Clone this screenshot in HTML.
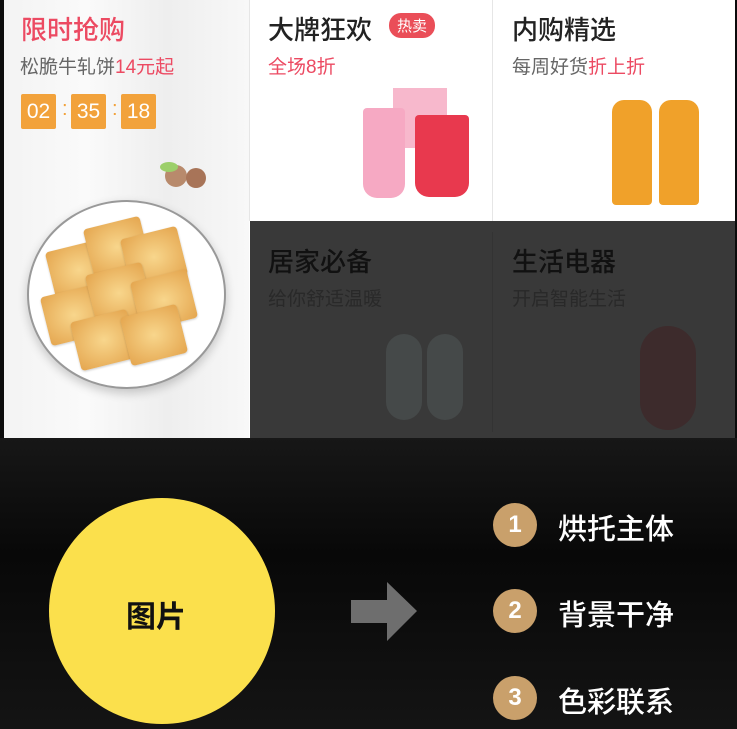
<!DOCTYPE html><html><head><meta charset="utf-8"><style>
body{margin:0;width:737px;height:729px;overflow:hidden;background:#0b0b0b;font-family:"Liberation Sans","Noto Sans CJK SC",sans-serif;position:relative}
.a{position:absolute}
.t{font-size:26px;color:#222;white-space:nowrap;font-weight:500}
.s{font-size:19px;color:#666;white-space:nowrap}
.r{color:#ec4a62}
.box{background:#f2a23b;color:#fff;font-size:21px;width:35px;height:35px;line-height:35px;text-align:center;border-radius:2px}
.num{width:44px;height:44px;border-radius:50%;background:#c9a06b;color:#fff;font-size:24px;font-weight:bold;text-align:center;line-height:44px}
.lb{color:#fff;font-size:29px;white-space:nowrap;font-weight:500}
.ck{position:absolute;width:58px;height:50px;background:radial-gradient(#f8d68c,#e4a54e);border-radius:4px;transform:rotate(-14deg);box-shadow:0 1px 2px rgba(0,0,0,.2)}
</style></head><body>
<div class="a" style="left:0;top:438px;width:737px;height:291px;background:linear-gradient(#171717,#080808 40%,#141414)"></div>
<div class="a" style="left:4px;top:0;width:731px;height:438px;background:#fff"></div>
<div class="a" style="left:4px;top:0;width:245px;height:438px;background:linear-gradient(90deg,#f3f3f3,#fafafa,#eee,#f8f8f8)"></div>
<div class="a" style="left:249px;top:0;width:1px;height:221px;background:#e6e6e6"></div>
<div class="a" style="left:492px;top:0;width:1px;height:221px;background:#e6e6e6"></div>
<div class="a t r" style="left:21px;top:10px">限时抢购</div>
<div class="a s" style="left:20px;top:52px">松脆牛轧饼<span class="r">14元起</span></div>
<div class="a box" style="left:21px;top:94px">02</div>
<div class="a" style="left:62px;top:98px;color:#f2a23b;font-size:20px">:</div>
<div class="a box" style="left:71px;top:94px">35</div>
<div class="a" style="left:112px;top:98px;color:#f2a23b;font-size:20px">:</div>
<div class="a box" style="left:121px;top:94px">18</div>
<div class="a" style="left:165px;top:165px;width:22px;height:22px;border-radius:50%;background:#b88a6c"></div>
<div class="a" style="left:186px;top:168px;width:20px;height:20px;border-radius:50%;background:#a87458"></div>
<div class="a" style="left:160px;top:162px;width:18px;height:10px;border-radius:50%;background:#9ccf6a"></div>
<div class="a" style="left:27px;top:200px;width:195px;height:185px;border-radius:50%;background:#fff;border:2px solid #999;box-shadow:0 4px 10px rgba(0,0,0,.2)"></div>
<div class="ck" style="left:50px;top:245px"></div>
<div class="ck" style="left:88px;top:222px"></div>
<div class="ck" style="left:125px;top:232px"></div>
<div class="ck" style="left:45px;top:290px"></div>
<div class="ck" style="left:90px;top:268px"></div>
<div class="ck" style="left:135px;top:275px"></div>
<div class="ck" style="left:75px;top:315px"></div>
<div class="ck" style="left:125px;top:310px"></div>
<div class="a t" style="left:268px;top:10px">大牌狂欢</div>
<div class="a" style="left:389px;top:13px;background:#ea4e58;color:#fff;font-size:15px;border-radius:12px;padding:2px 8px">热卖</div>
<div class="a s r" style="left:268px;top:52px">全场8折</div>
<div class="a" style="left:393px;top:88px;width:54px;height:60px;background:#f7b8cc"></div>
<div class="a" style="left:363px;top:108px;width:42px;height:90px;background:#f6a9c3;border-radius:4px 4px 14px 14px"></div>
<div class="a" style="left:415px;top:115px;width:54px;height:82px;background:#e8394e;border-radius:4px 4px 14px 14px"></div>
<div class="a t" style="left:512px;top:10px">内购精选</div>
<div class="a s" style="left:512px;top:52px">每周好货<span class="r">折上折</span></div>
<div class="a" style="left:612px;top:100px;width:40px;height:105px;background:#f0a12a;border-radius:12px 12px 4px 4px"></div>
<div class="a" style="left:659px;top:100px;width:40px;height:105px;background:#f0a12a;border-radius:12px 12px 4px 4px"></div>
<div class="a" style="left:250px;top:221px;width:485px;height:217px;background:#393939"></div>
<div class="a" style="left:492px;top:232px;width:1px;height:200px;background:#333"></div>
<div class="a t" style="left:268px;top:242px;color:#111">居家必备</div>
<div class="a s" style="left:268px;top:284px;color:#292929">给你舒适温暖</div>
<div class="a t" style="left:512px;top:242px;color:#111">生活电器</div>
<div class="a s" style="left:512px;top:284px;color:#292929">开启智能生活</div>
<div class="a" style="left:386px;top:334px;width:36px;height:86px;border-radius:18px;background:#454949"></div>
<div class="a" style="left:427px;top:334px;width:36px;height:86px;border-radius:18px;background:#454949"></div>
<div class="a" style="left:640px;top:326px;width:56px;height:104px;border-radius:28px;background:#3d2b2c"></div>
<div class="a" style="left:49px;top:498px;width:226px;height:226px;border-radius:50%;background:#fbe04c"></div>
<div class="a" style="left:126px;top:592px;font-size:30px;font-weight:bold;color:#111">图片</div>
<svg class="a" style="left:351px;top:582px" width="68" height="60"><polygon points="0,18 36,18 36,0 66,29 36,59 36,41 0,41" fill="#6e6e6e"/></svg>
<div class="a num" style="left:493px;top:503px">1</div>
<div class="a lb" style="left:558px;top:506px">烘托主体</div>
<div class="a num" style="left:493px;top:589px">2</div>
<div class="a lb" style="left:558px;top:592px">背景干净</div>
<div class="a num" style="left:493px;top:676px">3</div>
<div class="a lb" style="left:558px;top:679px">色彩联系</div>
</body></html>
